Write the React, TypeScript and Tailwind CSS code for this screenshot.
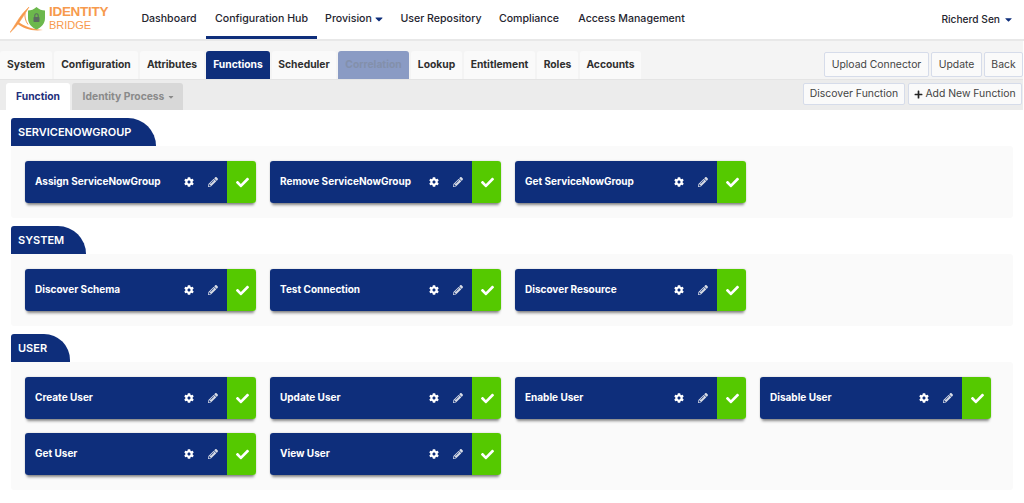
import React from 'react';
import { FaCaretDown, FaCheck, FaCog, FaPencilAlt, FaPlus } from 'react-icons/fa';

const navy = 'bg-[#0e2e7b]';

function Logo() {
  return (
    <div className="flex items-center w-[110px] h-[34px] shrink-0 ml-[10px]">
      <svg viewBox="0 0 38 34" className="w-[38px] h-[34px] shrink-0">
        <path d="M0 29.5 C5 23 9 13 19 4 C14 12 8 23 0 29.5 Z" fill="#f79a4d" stroke="#f79a4d" strokeWidth="0.6" />
        <path d="M8 18.5 C14 23.5 22 26 33 27 C22 28.5 13 25.5 7 20.5 Z" fill="#f79a4d" />
        <path d="M15 10 C14.5 14 15.5 18 18 21.5" fill="none" stroke="#f79a4d" strokeWidth="1" />
        <path d="M26.5 4 C29 6.5 32 7.5 35 7.5 L35 15 C35 21 31 24.5 26.5 26.5 C22 24.5 18 21 18 15 L18 7.5 C21 7.5 24 6.5 26.5 4 Z" fill="#6cb84c" />
        <rect x="23.5" y="14" width="6" height="5" rx="0.8" fill="#5b6b60" />
        <path d="M24.8 14 V12.5 a1.7 1.7 0 0 1 3.4 0 V14" fill="none" stroke="#5b6b60" strokeWidth="1.1" />
      </svg>
      <div className="flex flex-col pl-[1px] text-[#f79a4d] leading-none font-['Liberation_Sans',sans-serif] -mt-[3px]">
        <span className="text-[13.5px] font-bold tracking-[-0.3px]">IDENTITY</span>
        <span className="text-[11px] mt-[1px]">BRIDGE</span>
      </div>
    </div>
  );
}

function NavItem({ label, width, active, caret }: { label: string; width: string; active?: boolean; caret?: boolean }) {
  return (
    <div
      className={
        'h-full flex items-center justify-center gap-[1px] border-b-[3px] pt-[2px] text-[10.6px] font-medium text-[#24242e] ' +
        width +
        (active ? ' border-[#0e2e7b]' : ' border-transparent')
      }
    >
      {label}
      {caret && <FaCaretDown className="text-[#0e2e7b] text-[12px]" />}
    </div>
  );
}

function Tab({ label, width, active, disabled }: { label: string; width: string; active?: boolean; disabled?: boolean }) {
  let color = 'bg-[#fafafa] text-[#2f2f2f]';
  if (active) color = navy + ' text-white';
  if (disabled) color = 'bg-[#8a9bc4] text-[#8390ab]';
  return (
    <div className={'h-[28px] flex items-center justify-center rounded-t-[3px] text-[10.3px] font-bold ' + width + ' ' + color}>
      {label}
    </div>
  );
}

function ActionButton({ children, width, height }: { children: React.ReactNode; width: string; height: string }) {
  return (
    <div
      className={
        'flex items-center justify-center rounded-[2px] border border-[#d6dcea] bg-[#fafafa] text-[10.4px] text-[#444] ' +
        width +
        ' ' +
        height
      }
    >
      {children}
    </div>
  );
}

function FunctionCard({ label }: { label: string }) {
  return (
    <div className="flex w-[231px] h-[42px] rounded-[3px] overflow-hidden shadow-[0_0_2px_rgba(0,0,0,0.2),0_4px_3px_-2px_rgba(0,0,0,0.45)]">
      <div className={'flex-1 flex items-center pl-[10px] ' + navy}>
        <span className="flex-1 pb-[2px] text-[10px] font-bold text-white">{label}</span>
        <FaCog className="text-white text-[10px] mr-[14px]" />
        <FaPencilAlt className="text-[#d8dce6] text-[10px] mr-[9px]" />
      </div>
      <div className="w-[29px] flex items-center justify-center pl-[1px] bg-[#55c900]">
        <FaCheck className="text-white text-[13px]" />
      </div>
    </div>
  );
}

function Section({ title, width, radius, functions }: { title: string; width: string; radius: string; functions: string[] }) {
  return (
    <section className="mb-[8px]">
      <div className={'h-[28px] flex items-center pl-[7px] rounded-tl-[3px] text-[11px] font-semibold text-white ' + navy + ' ' + width + ' ' + radius}>
        {title}
      </div>
      <div className="w-[1002px] flex flex-wrap gap-x-[14px] gap-y-[14px] rounded-[3px] bg-[#fafafa] px-[14px] py-[15px]">
        {functions.map((f) => (
          <FunctionCard key={f} label={f} />
        ))}
      </div>
    </section>
  );
}

export default function App() {
  return (
    <div className="w-[1024px] h-[503px] overflow-hidden bg-white font-['Inter',sans-serif]">
      <header className="h-[41px] flex items-center border-b-2 border-[#e8e8e8]">
        <Logo />
        <nav className="h-full flex ml-[12px]">
          <NavItem label="Dashboard" width="w-[74px]" />
          <NavItem label="Configuration Hub" width="w-[111px]" active />
          <NavItem label="Provision" width="w-[76px]" caret />
          <NavItem label="User Repository" width="w-[96px]" />
          <NavItem label="Compliance" width="w-[80px]" />
          <NavItem label="Access Management" width="w-[125px]" />
        </nav>
        <div className="ml-auto mr-[10px] flex items-center gap-[3px] text-[10.2px] font-medium text-[#24242e]">
          Richerd Sen
          <FaCaretDown className="text-[#0e2e7b] text-[11px]" />
        </div>
      </header>

      <div className="w-[1023px] h-[39px] flex items-end justify-between bg-[#f4f4f4] border-b border-[#e4e4e4]">
        <div className="flex gap-[2px]">
          <Tab label="System" width="w-[52px]" />
          <Tab label="Configuration" width="w-[84px]" />
          <Tab label="Attributes" width="w-[64px]" />
          <Tab label="Functions" width="w-[64px]" active />
          <Tab label="Scheduler" width="w-[64px]" />
          <Tab label="Correlation" width="w-[71px]" disabled />
          <Tab label="Lookup" width="w-[51px]" />
          <Tab label="Entitlement" width="w-[71px]" />
          <Tab label="Roles" width="w-[41px]" />
          <Tab label="Accounts" width="w-[61px]" />
        </div>
        <div className="flex gap-[2px] pb-[2px]">
          <ActionButton width="w-[105px]" height="h-[25px]">Upload Connector</ActionButton>
          <ActionButton width="w-[51px]" height="h-[25px]">Update</ActionButton>
          <ActionButton width="w-[39px]" height="h-[25px]">Back</ActionButton>
        </div>
      </div>

      <div className="w-[1023px] h-[30px] flex items-end justify-between bg-[#ececec] pl-[6px]">
        <div className="flex gap-[2px]">
          <div className="w-[64px] h-[27px] flex items-center justify-center rounded-t-[3px] bg-white text-[10.3px] font-bold text-[#1f2f7c]">
            Function
          </div>
          <div className="w-[111px] h-[27px] flex items-center justify-center gap-[3px] pl-[3px] rounded-t-[3px] bg-[#d8d8d8] text-[10.3px] font-bold text-[#8a8a8a]">
            Identity Process
            <FaCaretDown className="text-[8px]" />
          </div>
        </div>
        <div className="flex gap-[3px] pb-[5px] pr-[1px]">
          <ActionButton width="w-[102px]" height="h-[22px]">Discover Function</ActionButton>
          <ActionButton width="w-[114px]" height="h-[22px]">
            <FaPlus className="text-[9px] text-[#222] mr-[2px]" />
            Add New Function
          </ActionButton>
        </div>
      </div>

      <main className="pl-[11px] pt-[8px]">
        <Section
          title="SERVICENOWGROUP"
          width="w-[145px]"
          radius="rounded-tr-[28px]"
          functions={['Assign ServiceNowGroup', 'Remove ServiceNowGroup', 'Get ServiceNowGroup']}
        />
        <Section
          title="SYSTEM"
          width="w-[75px]"
          radius="rounded-tr-[28px]"
          functions={['Discover Schema', 'Test Connection', 'Discover Resource']}
        />
        <Section
          title="USER"
          width="w-[59px]"
          radius="rounded-tr-[26px]"
          functions={['Create User', 'Update User', 'Enable User', 'Disable User', 'Get User', 'View User']}
        />
      </main>
    </div>
  );
}
